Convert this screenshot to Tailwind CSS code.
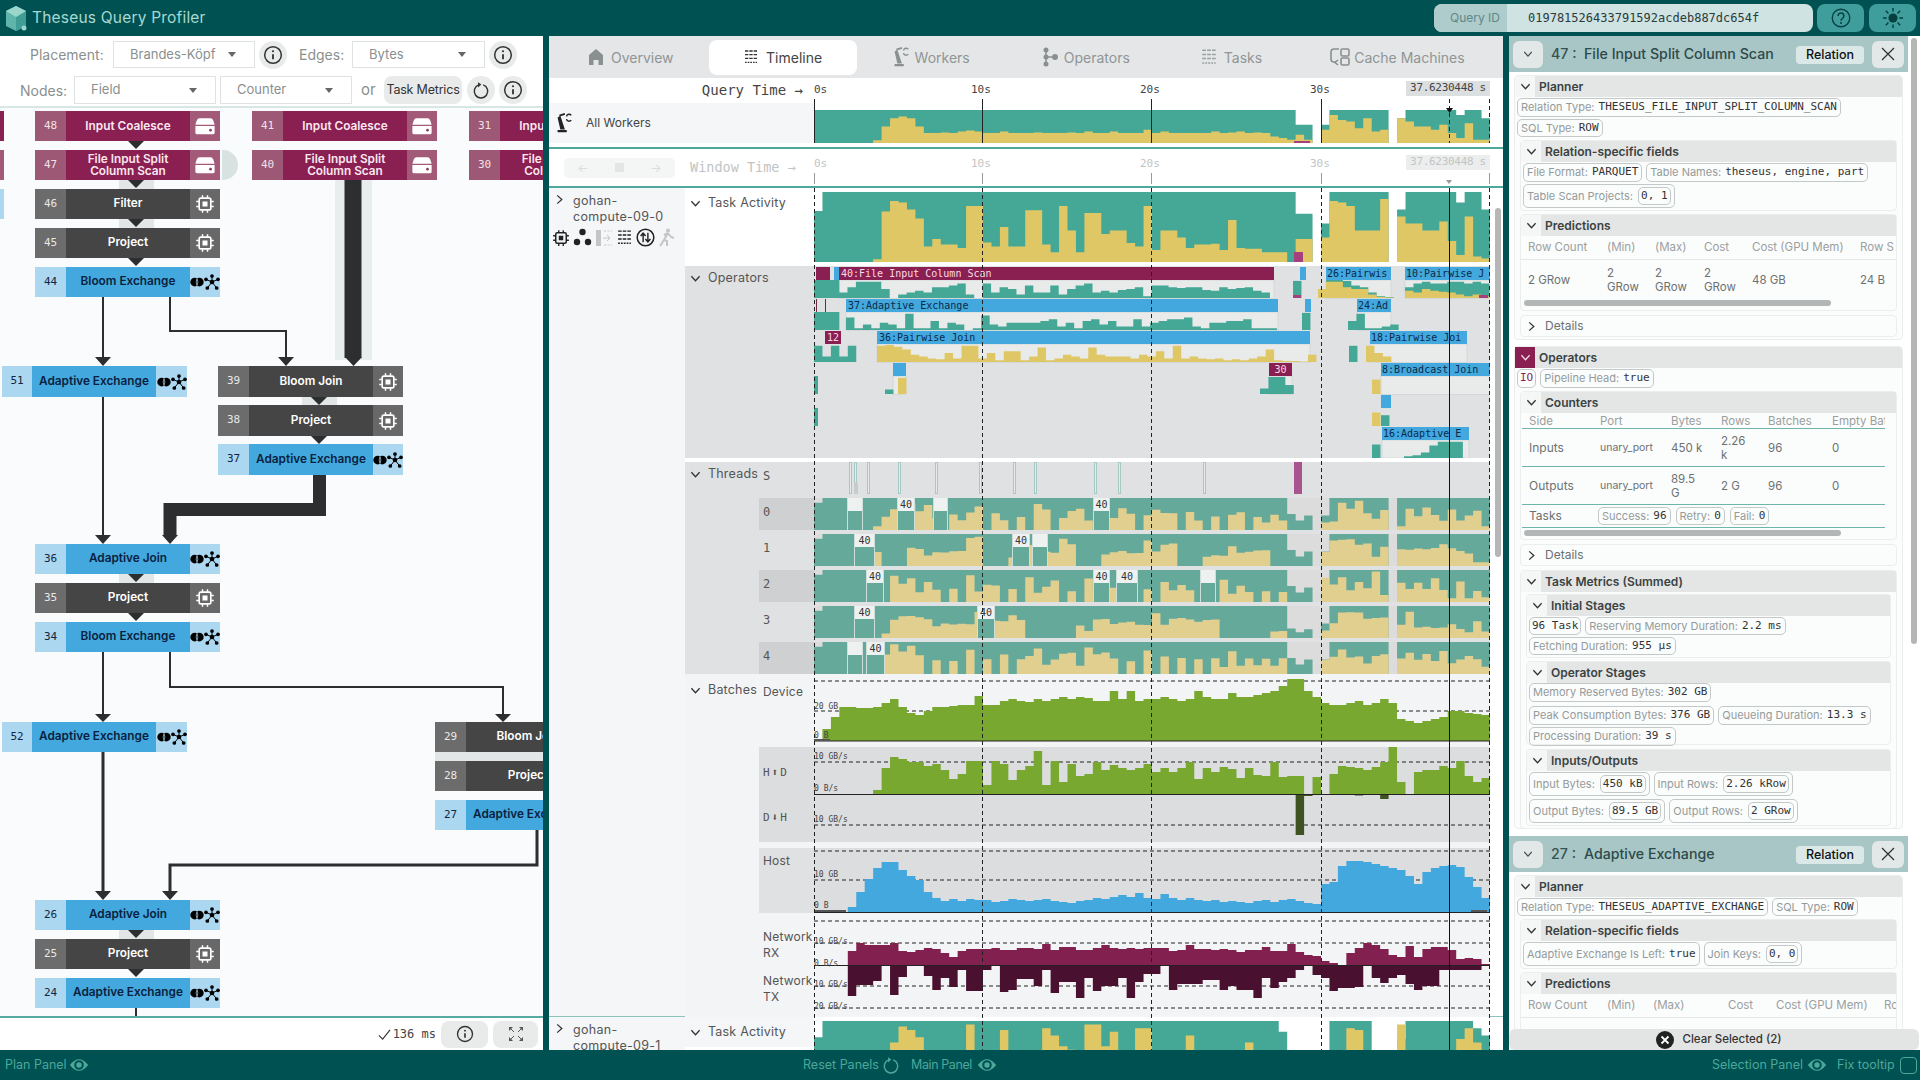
<!DOCTYPE html>
<html lang="en">
<head>
<meta charset="utf-8">
<title>Theseus Query Profiler</title>
<script src="https://cdn.jsdelivr.net/npm/@tailwindcss/browser@4"></script>
</head>
<body class="m-0 h-[1080px] w-[1920px] overflow-hidden bg-[#005151] font-['Inter',sans-serif]">
<svg class="hidden">
  <symbol id="chip" viewBox="0 0 24 24"><rect x="5" y="5" width="14" height="14" rx="2" fill="none" stroke="currentColor" stroke-width="2"/><rect x="9" y="9" width="6" height="6" fill="currentColor"/><path d="M9 1.500v3M15 1.500v3M9 19.500v3M15 19.500v3M1.500 9h3M1.500 15h3M19.500 9h3M19.500 15h3" stroke="currentColor" stroke-width="1.800" fill="none"/></symbol>
  <symbol id="drive" viewBox="0 0 24 24"><path d="M6 3.500h12q2 0 3 2.500l1.500 4.500h-21L3 6q1-2.500 3-2.500z" fill="currentColor"/><path d="M1.500 12h21v7q0 2-2 2h-17q-2 0-2-2z" fill="currentColor"/><circle cx="18" cy="16.500" r="1.500" fill="#8a3f62"/></symbol>
  <symbol id="join" viewBox="0 0 24 24"><circle cx="8" cy="12" r="7.500" fill="currentColor"/><circle cx="16" cy="12" r="7.500" fill="currentColor"/><path d="M12 6q-3 6 0 12M12 6q3 6 0 12" stroke="#acd7f0" stroke-width="1.200" fill="none"/></symbol>
  <symbol id="net" viewBox="0 0 24 24"><path d="M12 12 12 3M12 12 3 8M12 12 21 8M12 12 5 21M12 12 19 21" stroke="currentColor" stroke-width="1.500" fill="none"/><circle cx="12" cy="12" r="3.500" fill="currentColor"/><circle cx="12" cy="3" r="2.800" fill="currentColor"/><circle cx="3" cy="8" r="2.800" fill="currentColor"/><circle cx="21" cy="8" r="2.800" fill="currentColor"/><circle cx="5" cy="21" r="2.800" fill="currentColor"/><circle cx="19" cy="21" r="2.800" fill="currentColor"/></symbol>
  <symbol id="info" viewBox="0 0 24 24"><circle cx="12" cy="12" r="10" fill="none" stroke="currentColor" stroke-width="1.800"/><path d="M12 11v6" stroke="currentColor" stroke-width="2.200"/><circle cx="12" cy="7.500" r="1.300" fill="currentColor"/></symbol>
  <symbol id="reload" viewBox="0 0 24 24"><path d="M9 5.200A9 9 0 1 0 15 5.200" fill="none" stroke="currentColor" stroke-width="1.900"/><path d="M8 1.500 12.500 4.500 8 8.500z" fill="currentColor"/></symbol>
  <symbol id="eye" viewBox="0 0 24 24"><path d="M1 12Q12-2 23 12 12 26 1 12z" fill="currentColor"/><circle cx="12" cy="12" r="4.500" fill="none" stroke="#005151" stroke-width="2.500"/></symbol>
  <symbol id="chev" viewBox="0 0 12 12"><path d="M1.500 3.500 6 8.500 10.500 3.500" fill="none" stroke="currentColor" stroke-width="1.400"/></symbol>
  <symbol id="chevr" viewBox="0 0 12 12"><path d="M3.500 1.500 8.500 6 3.500 10.500" fill="none" stroke="currentColor" stroke-width="1.400"/></symbol>
  <symbol id="lines" viewBox="0 0 24 24"><path d="M3 3h18M3 8.500h18M3 14h18" stroke="currentColor" stroke-width="2" stroke-dasharray="5 1.500" fill="none"/><path d="M3 20h18" stroke="currentColor" stroke-width="2" stroke-dasharray="2.500 1.500" fill="none"/></symbol>
  <symbol id="robot" viewBox="0 0 24 24"><path d="M5 22h10v-2.500H5zM8 19 5 6l3-2 5 15z" fill="currentColor"/><path d="M7 4 13 2" stroke="currentColor" stroke-width="2"/><path d="M20 3.500a4 4 0 0 0-5 0M20 9a4 4 0 0 1-5 0M15 3.500v1.500M15 9V7.500" fill="none" stroke="currentColor" stroke-width="1.500"/></symbol>
</svg>

<div class="flex h-[1080px] flex-col">
  <!-- top bar -->
  <header class="flex h-[36px] shrink-0 items-center">
    <svg class="ml-[5px] h-[27px] w-[22px]" viewBox="0 0 22 27"><path d="M11 1 21 6v15l-10 5-10-5V6z" fill="#5fb5ab"/><path d="M11 12 21 6v15l-10 5z" fill="#3f9d95"/><path d="M11 12 1 6l10-5 10 5z" fill="#9ad6cc"/><circle cx="19" cy="23" r="2.500" fill="#9ad6cc"/></svg>
    <span class="ml-[5px] text-[15.5px] tracking-[.2px] text-[#a7d9d2]">Theseus Query Profiler</span>
    <div class="ml-auto flex h-[28px] w-[379px] items-center rounded-[8px] bg-[#cfe3e3]">
      <span class="flex h-full w-[73px] items-center justify-end rounded-l-[8px] bg-[#aecccc] pr-[7px] text-[12px] text-[#5f8888]">Query ID</span>
      <span class="ml-[21px] font-['DejaVu_Sans_Mono'] text-[12px] text-[#2b3a3a]">019781526433791592acdeb887dc654f</span>
    </div>
    <div class="ml-[4px] flex h-[28px] w-[47px] items-center justify-center rounded-[8px] bg-[#3f9d9c] text-[#063f3f]"><svg class="h-[20px] w-[20px]" viewBox="0 0 24 24"><circle cx="12" cy="12" r="10.500" fill="none" stroke="currentColor" stroke-width="1.600"/><path d="M8.500 9.500a3.500 3.500 0 1 1 5.500 2.800c-1.300.9-2 1.500-2 3" fill="none" stroke="currentColor" stroke-width="1.800"/><circle cx="12" cy="18" r="1.200" fill="currentColor"/></svg></div>
    <div class="ml-[5px] mr-[4px] flex h-[28px] w-[47px] items-center justify-center rounded-[8px] bg-[#3f9d9c] text-[#063f3f]"><svg class="h-[22px] w-[22px]" viewBox="0 0 24 24"><circle cx="12" cy="12" r="5" fill="currentColor"/><path d="M12 1v4M12 19v4M1 12h4M19 12h4M4.200 4.200l2.800 2.800M17 17l2.800 2.800M4.200 19.800 7 17M17 7l2.800-2.800" stroke="currentColor" stroke-width="1.600"/></svg></div>
  </header>

  <div class="flex h-[1014px] shrink-0">
    <!-- left: plan panel -->
    <section class="flex w-[543px] shrink-0 flex-col bg-white">
      <div class="h-[72px] shrink-0 border-b-2 border-[#d8e6e4]">
        <div class="mt-[5px] flex h-[27px] items-center pl-[30px] text-[14px] text-[#8a8f8f]">
          <span class="w-[83px]">Placement:</span>
          <div class="flex h-full w-[142px] items-center justify-between border border-[#dfe2e2] pl-[16px] pr-[18px] text-[13px]"><span>Brandes-Köpf</span><span class="h-0 w-0 border-x-[4px] border-t-[5px] border-x-transparent border-t-[#666]"></span></div>
          <span class="ml-[4px] flex h-[28px] w-[28px] items-center justify-center rounded-full bg-[#e9eaea] text-[#333]"><svg class="h-[20px] w-[20px]"><use href="#info"/></svg></span>
          <span class="ml-[12px] w-[53px]">Edges:</span>
          <div class="flex h-full w-[133px] items-center justify-between border border-[#dfe2e2] pl-[16px] pr-[18px] text-[13px]"><span>Bytes</span><span class="h-0 w-0 border-x-[4px] border-t-[5px] border-x-transparent border-t-[#666]"></span></div>
          <span class="ml-[4px] flex h-[28px] w-[28px] items-center justify-center rounded-full bg-[#e9eaea] text-[#333]"><svg class="h-[20px] w-[20px]"><use href="#info"/></svg></span>
        </div>
        <div class="mt-[8px] flex h-[28px] items-center pl-[20px] text-[14px] text-[#8a8f8f]">
          <span class="w-[54px]">Nodes:</span>
          <div class="flex h-full w-[142px] items-center justify-between border border-[#dfe2e2] pl-[16px] pr-[18px] text-[13px]"><span>Field</span><span class="h-0 w-0 border-x-[4px] border-t-[5px] border-x-transparent border-t-[#666]"></span></div>
          <div class="ml-[4px] flex h-full w-[132px] items-center justify-between border border-[#dfe2e2] pl-[16px] pr-[18px] text-[13px]"><span>Counter</span><span class="h-0 w-0 border-x-[4px] border-t-[5px] border-x-transparent border-t-[#666]"></span></div>
          <span class="ml-[9px] w-[15px] text-[15px]">or</span>
          <span class="ml-[8px] flex h-full w-[78px] items-center justify-center rounded-[8px] bg-[#e9eaea] text-[12.5px] tracking-[-.2px] text-[#333]">Task Metrics</span>
          <span class="ml-[5px] flex h-[28px] w-[28px] items-center justify-center rounded-full bg-[#e9eaea] text-[#333]"><svg class="h-[18px] w-[18px]"><use href="#reload"/></svg></span>
          <span class="ml-[4px] flex h-[28px] w-[28px] items-center justify-center rounded-full bg-[#e9eaea] text-[#333]"><svg class="h-[20px] w-[20px]"><use href="#info"/></svg></span>
        </div>
      </div>

      <div class="relative h-[908px] flex-1 overflow-hidden bg-[#f9fbfc]">
        <svg class="absolute left-0 top-0 h-[908px] w-[543px]" fill="none" stroke="#2c2e30">
          <rect x="119" y="72" width="35" height="9" fill="#e3e6e6" stroke="none"/><rect x="119" y="111" width="35" height="9" fill="#e3e6e6" stroke="none"/><rect x="302" y="289" width="35" height="8" fill="#e3e6e6" stroke="none"/><rect x="119" y="466" width="35" height="9" fill="#e3e6e6" stroke="none"/><rect x="119" y="822" width="35" height="9" fill="#e3e6e6" stroke="none"/><rect x="435" y="644" width="108" height="9" fill="#e3e6e6" stroke="none"/>
          <rect x="335" y="72" width="37" height="180" fill="#e8eeee" stroke="none"/>
          <path d="M353 72V250" stroke-width="17"/>
          <path d="M103 189V252M170 189V223H286V252" stroke-width="2"/>
          <path d="M103 289V428" stroke-width="2"/>
          <path d="M319.500 367V401.500H170V428" stroke-width="13"/>
          <path d="M103 544V608M170 544V579H503V608" stroke-width="2"/>
          <path d="M103 644V785M537 722V757H170V785" stroke-width="3"/>
          <path d="M136 900V908" stroke-width="2"/>
          <g fill="#2c2e30" stroke="none">
            <path d="M128 33h16l-8 8zM128 72h16l-8 8zM128 111h16l-8 8zM128 150h16l-8 8z"/>
            <path d="M345 249h17l-8.500 9zM95 249h16l-8 9zM278 249h16l-8 9z"/>
            <path d="M311 289h16l-8 8zM311 328h16l-8 8z"/>
            <path d="M95 427h16l-8 9zM162 427h16l-8 9zM128 466h16l-8 8zM128 505h16l-8 8z"/>
            <path d="M95 606h16l-8 8zM495 606h16l-8 8zM527 653h16l-8 8zM527 692h16l-8 8z"/>
            <path d="M95 783h16l-8 9zM162 783h16l-8 9zM128 822h16l-8 8zM128 861h16l-8 8z"/>
          </g>
        </svg>

        <!-- plan nodes -->
        <div class="absolute left-[-181px] top-[3px] flex h-[30px] w-[185px] items-center bg-[#8a1f52]"></div>
        <div class="absolute left-[-181px] top-[42px] flex h-[30px] w-[185px] items-center bg-[#a35a78]"></div>
        <div class="absolute left-[-181px] top-[81px] h-[30px] w-[185px] bg-[#acd7f0]"></div>
        <div class="absolute left-[222px] top-[42px] h-[30px] w-[16px] rounded-r-full bg-[#d7e2e1]"></div>

        <div class="absolute left-[35px] top-[3px] flex h-[30px] w-[185px] text-white"><span class="flex w-[31px] items-center justify-center bg-[#9c5874] font-['DejaVu_Sans_Mono'] text-[11px] text-[#f4e1e9]">48</span><span class="flex w-[124px] items-center justify-center bg-[#8a1f52] text-center text-[11.800px] font-semibold leading-[12px] text-[#fbe7ef]">Input Coalesce</span><span class="flex w-[30px] items-center justify-center bg-[#a35a78]"><svg class="h-[22px] w-[22px] text-white"><use href="#drive"/></svg></span></div>
        <div class="absolute left-[35px] top-[42px] flex h-[30px] w-[185px] text-white"><span class="flex w-[31px] items-center justify-center bg-[#9c5874] font-['DejaVu_Sans_Mono'] text-[11px] text-[#f4e1e9]">47</span><span class="flex w-[124px] items-center justify-center bg-[#8a1f52] text-center text-[11.800px] font-semibold leading-[12px] text-[#fbe7ef]">File Input Split<br>Column Scan</span><span class="flex w-[30px] items-center justify-center bg-[#a35a78]"><svg class="h-[22px] w-[22px] text-white"><use href="#drive"/></svg></span></div>
        <div class="absolute left-[35px] top-[81px] flex h-[30px] w-[185px]"><span class="flex w-[31px] items-center justify-center bg-[#6c6c6c] font-['DejaVu_Sans_Mono'] text-[11px] text-[#e8e8e8]">46</span><span class="flex w-[124px] items-center justify-center bg-[#454545] text-[11.800px] font-semibold text-white">Filter</span><span class="flex w-[30px] items-center justify-center bg-[#686868] text-white"><svg class="h-[20px] w-[20px]"><use href="#chip"/></svg></span></div>
        <div class="absolute left-[35px] top-[120px] flex h-[30px] w-[185px]"><span class="flex w-[31px] items-center justify-center bg-[#6c6c6c] font-['DejaVu_Sans_Mono'] text-[11px] text-[#e8e8e8]">45</span><span class="flex w-[124px] items-center justify-center bg-[#454545] text-[11.800px] font-semibold text-white">Project</span><span class="flex w-[30px] items-center justify-center bg-[#686868] text-white"><svg class="h-[20px] w-[20px]"><use href="#chip"/></svg></span></div>
        <div class="absolute left-[35px] top-[159px] flex h-[30px] w-[185px]"><span class="flex w-[31px] items-center justify-center bg-[#acd7f0] font-['DejaVu_Sans_Mono'] text-[11px] text-[#12263f]">44</span><span class="flex w-[124px] items-center justify-center bg-[#42a8de] text-[11.800px] font-semibold text-[#0a1f3f]">Bloom Exchange</span><span class="flex w-[30px] items-center justify-center bg-[#acd7f0] text-black"><svg class="h-[14px] w-[14px]"><use href="#join"/></svg><svg class="h-[16px] w-[16px]"><use href="#net"/></svg></span></div>

        <div class="absolute left-[252px] top-[3px] flex h-[30px] w-[185px]"><span class="flex w-[31px] items-center justify-center bg-[#9c5874] font-['DejaVu_Sans_Mono'] text-[11px] text-[#f4e1e9]">41</span><span class="flex w-[124px] items-center justify-center bg-[#8a1f52] text-center text-[11.800px] font-semibold leading-[12px] text-[#fbe7ef]">Input Coalesce</span><span class="flex w-[30px] items-center justify-center bg-[#a35a78]"><svg class="h-[22px] w-[22px] text-white"><use href="#drive"/></svg></span></div>
        <div class="absolute left-[252px] top-[42px] flex h-[30px] w-[185px]"><span class="flex w-[31px] items-center justify-center bg-[#9c5874] font-['DejaVu_Sans_Mono'] text-[11px] text-[#f4e1e9]">40</span><span class="flex w-[124px] items-center justify-center bg-[#8a1f52] text-center text-[11.800px] font-semibold leading-[12px] text-[#fbe7ef]">File Input Split<br>Column Scan</span><span class="flex w-[30px] items-center justify-center bg-[#a35a78]"><svg class="h-[22px] w-[22px] text-white"><use href="#drive"/></svg></span></div>
        <div class="absolute left-[469px] top-[3px] flex h-[30px] w-[185px]"><span class="flex w-[31px] items-center justify-center bg-[#9c5874] font-['DejaVu_Sans_Mono'] text-[11px] text-[#f4e1e9]">31</span><span class="flex w-[124px] items-center justify-center bg-[#8a1f52] text-center text-[11.800px] font-semibold leading-[12px] text-[#fbe7ef]">Input Coalesce</span></div>
        <div class="absolute left-[469px] top-[42px] flex h-[30px] w-[185px]"><span class="flex w-[31px] items-center justify-center bg-[#9c5874] font-['DejaVu_Sans_Mono'] text-[11px] text-[#f4e1e9]">30</span><span class="flex w-[124px] items-center justify-center bg-[#8a1f52] text-center text-[11.800px] font-semibold leading-[12px] text-[#fbe7ef]">File Input Split<br>Column Scan</span></div>

        <div class="absolute left-[2px] top-[258px] flex h-[31px] w-[185px]"><span class="flex w-[30px] items-center justify-center bg-[#acd7f0] font-['DejaVu_Sans_Mono'] text-[11px] text-[#12263f]">51</span><span class="flex w-[124px] items-center justify-center bg-[#42a8de] text-[11.800px] font-semibold text-[#0a1f3f]">Adaptive Exchange</span><span class="flex w-[31px] items-center justify-center bg-[#acd7f0] text-black"><svg class="h-[14px] w-[14px]"><use href="#join"/></svg><svg class="h-[16px] w-[16px]"><use href="#net"/></svg></span></div>
        <div class="absolute left-[218px] top-[258px] flex h-[31px] w-[185px]"><span class="flex w-[31px] items-center justify-center bg-[#6c6c6c] font-['DejaVu_Sans_Mono'] text-[11px] text-[#e8e8e8]">39</span><span class="flex w-[124px] items-center justify-center bg-[#454545] text-[11.800px] font-semibold text-white">Bloom Join</span><span class="flex w-[30px] items-center justify-center bg-[#686868] text-white"><svg class="h-[20px] w-[20px]"><use href="#chip"/></svg></span></div>
        <div class="absolute left-[218px] top-[297px] flex h-[31px] w-[185px]"><span class="flex w-[31px] items-center justify-center bg-[#6c6c6c] font-['DejaVu_Sans_Mono'] text-[11px] text-[#e8e8e8]">38</span><span class="flex w-[124px] items-center justify-center bg-[#454545] text-[11.800px] font-semibold text-white">Project</span><span class="flex w-[30px] items-center justify-center bg-[#686868] text-white"><svg class="h-[20px] w-[20px]"><use href="#chip"/></svg></span></div>
        <div class="absolute left-[218px] top-[336px] flex h-[31px] w-[185px]"><span class="flex w-[31px] items-center justify-center bg-[#acd7f0] font-['DejaVu_Sans_Mono'] text-[11px] text-[#12263f]">37</span><span class="flex w-[124px] items-center justify-center bg-[#42a8de] text-[11.800px] font-semibold text-[#0a1f3f]">Adaptive Exchange</span><span class="flex w-[30px] items-center justify-center bg-[#acd7f0] text-black"><svg class="h-[14px] w-[14px]"><use href="#join"/></svg><svg class="h-[16px] w-[16px]"><use href="#net"/></svg></span></div>

        <div class="absolute left-[35px] top-[436px] flex h-[30px] w-[185px]"><span class="flex w-[31px] items-center justify-center bg-[#acd7f0] font-['DejaVu_Sans_Mono'] text-[11px] text-[#12263f]">36</span><span class="flex w-[124px] items-center justify-center bg-[#42a8de] text-[11.800px] font-semibold text-[#0a1f3f]">Adaptive Join</span><span class="flex w-[30px] items-center justify-center bg-[#acd7f0] text-black"><svg class="h-[14px] w-[14px]"><use href="#join"/></svg><svg class="h-[16px] w-[16px]"><use href="#net"/></svg></span></div>
        <div class="absolute left-[35px] top-[475px] flex h-[30px] w-[185px]"><span class="flex w-[31px] items-center justify-center bg-[#6c6c6c] font-['DejaVu_Sans_Mono'] text-[11px] text-[#e8e8e8]">35</span><span class="flex w-[124px] items-center justify-center bg-[#454545] text-[11.800px] font-semibold text-white">Project</span><span class="flex w-[30px] items-center justify-center bg-[#686868] text-white"><svg class="h-[20px] w-[20px]"><use href="#chip"/></svg></span></div>
        <div class="absolute left-[35px] top-[514px] flex h-[30px] w-[185px]"><span class="flex w-[31px] items-center justify-center bg-[#acd7f0] font-['DejaVu_Sans_Mono'] text-[11px] text-[#12263f]">34</span><span class="flex w-[124px] items-center justify-center bg-[#42a8de] text-[11.800px] font-semibold text-[#0a1f3f]">Bloom Exchange</span><span class="flex w-[30px] items-center justify-center bg-[#acd7f0] text-black"><svg class="h-[14px] w-[14px]"><use href="#join"/></svg><svg class="h-[16px] w-[16px]"><use href="#net"/></svg></span></div>

        <div class="absolute left-[2px] top-[614px] flex h-[30px] w-[185px]"><span class="flex w-[30px] items-center justify-center bg-[#acd7f0] font-['DejaVu_Sans_Mono'] text-[11px] text-[#12263f]">52</span><span class="flex w-[124px] items-center justify-center bg-[#42a8de] text-[11.800px] font-semibold text-[#0a1f3f]">Adaptive Exchange</span><span class="flex w-[31px] items-center justify-center bg-[#acd7f0] text-black"><svg class="h-[14px] w-[14px]"><use href="#join"/></svg><svg class="h-[16px] w-[16px]"><use href="#net"/></svg></span></div>
        <div class="absolute left-[435px] top-[614px] flex h-[30px] w-[185px]"><span class="flex w-[31px] items-center justify-center bg-[#6c6c6c] font-['DejaVu_Sans_Mono'] text-[11px] text-[#e8e8e8]">29</span><span class="flex w-[124px] items-center justify-center bg-[#454545] text-[11.800px] font-semibold text-white">Bloom Join</span></div>
        <div class="absolute left-[435px] top-[653px] flex h-[30px] w-[185px]"><span class="flex w-[31px] items-center justify-center bg-[#6c6c6c] font-['DejaVu_Sans_Mono'] text-[11px] text-[#e8e8e8]">28</span><span class="flex w-[124px] items-center justify-center bg-[#454545] text-[11.800px] font-semibold text-white">Project</span></div>
        <div class="absolute left-[435px] top-[692px] flex h-[30px] w-[185px]"><span class="flex w-[31px] items-center justify-center bg-[#acd7f0] font-['DejaVu_Sans_Mono'] text-[11px] text-[#12263f]">27</span><span class="flex w-[124px] items-center justify-center bg-[#42a8de] text-[11.800px] font-semibold text-[#0a1f3f]">Adaptive Exchange</span></div>

        <div class="absolute left-[35px] top-[792px] flex h-[30px] w-[185px]"><span class="flex w-[31px] items-center justify-center bg-[#acd7f0] font-['DejaVu_Sans_Mono'] text-[11px] text-[#12263f]">26</span><span class="flex w-[124px] items-center justify-center bg-[#42a8de] text-[11.800px] font-semibold text-[#0a1f3f]">Adaptive Join</span><span class="flex w-[30px] items-center justify-center bg-[#acd7f0] text-black"><svg class="h-[14px] w-[14px]"><use href="#join"/></svg><svg class="h-[16px] w-[16px]"><use href="#net"/></svg></span></div>
        <div class="absolute left-[35px] top-[831px] flex h-[30px] w-[185px]"><span class="flex w-[31px] items-center justify-center bg-[#6c6c6c] font-['DejaVu_Sans_Mono'] text-[11px] text-[#e8e8e8]">25</span><span class="flex w-[124px] items-center justify-center bg-[#454545] text-[11.800px] font-semibold text-white">Project</span><span class="flex w-[30px] items-center justify-center bg-[#686868] text-white"><svg class="h-[20px] w-[20px]"><use href="#chip"/></svg></span></div>
        <div class="absolute left-[35px] top-[870px] flex h-[30px] w-[185px]"><span class="flex w-[31px] items-center justify-center bg-[#acd7f0] font-['DejaVu_Sans_Mono'] text-[11px] text-[#12263f]">24</span><span class="flex w-[124px] items-center justify-center bg-[#42a8de] text-[11.800px] font-semibold text-[#0a1f3f]">Adaptive Exchange</span><span class="flex w-[30px] items-center justify-center bg-[#acd7f0] text-black"><svg class="h-[14px] w-[14px]"><use href="#join"/></svg><svg class="h-[16px] w-[16px]"><use href="#net"/></svg></span></div>
      </div>

      <div class="flex h-[34px] shrink-0 items-center justify-end border-t-2 border-[#55ab9f] bg-white pr-[5px]">
        <svg class="h-[13px] w-[13px] text-[#333]" viewBox="0 0 14 14"><path d="M1 8 5 12 13 2" fill="none" stroke="currentColor" stroke-width="1.200"/></svg>
        <span class="ml-[2px] font-['DejaVu_Sans_Mono'] text-[12px] text-[#444]">136 ms</span>
        <span class="ml-[5px] flex h-[27px] w-[47px] items-center justify-center rounded-[8px] bg-[#e9eaea] text-[#333]"><svg class="h-[18px] w-[18px]"><use href="#info"/></svg></span>
        <span class="ml-[5px] flex h-[27px] w-[45px] items-center justify-center rounded-[8px] bg-[#e9eaea] text-[#555]"><svg class="h-[16px] w-[16px]" viewBox="0 0 16 16"><path d="M1 1h4L1 5zM15 1h-4l4 4zM1 15h4l-4-4zM15 15h-4l4-4z" fill="currentColor"/><path d="M3 3 6 6M13 3l-3 3M3 13l3-3M13 13l-3-3" stroke="currentColor"/></svg></span>
      </div>
    </section>

    <!-- main: timeline -->
    <main class="relative ml-[6px] flex w-[954px] shrink-0 flex-col overflow-hidden bg-white">
      <nav class="flex h-[42px] shrink-0 items-center bg-[#e4e6e7] text-[14px] text-[#909595]">
        <span class="ml-[38px] flex items-center"><svg class="h-[18px] w-[18px]" viewBox="0 0 18 18"><path d="M9 1 16 7v10h-4.500v-5h-5v5H2V7z" fill="#8a8f8f"/></svg><span class="ml-[6px]">Overview</span></span>
        <span class="ml-[35px] flex h-[35px] w-[148px] items-center justify-center rounded-[8px] bg-white text-[#444]"><svg class="h-[16px] w-[16px] text-[#333]"><use href="#lines"/></svg><span class="ml-[7px]">Timeline</span></span>
        <span class="ml-[33px] flex items-center text-[#8a8f8f]"><svg class="h-[22px] w-[22px]"><use href="#robot"/></svg><span class="ml-[3px] text-[#909595]">Workers</span></span>
        <span class="ml-[71px] flex items-center"><svg class="h-[20px] w-[18px]" viewBox="0 0 18 20"><circle cx="5" cy="3" r="2.500" fill="#8a8f8f"/><circle cx="5" cy="17" r="2.500" fill="#8a8f8f"/><circle cx="5" cy="10" r="2.500" fill="#8a8f8f"/><circle cx="14" cy="10" r="3" fill="#8a8f8f"/><path d="M5 3v14M5 10h9" stroke="#8a8f8f" stroke-width="1.500"/></svg><span class="ml-[5px]">Operators</span></span>
        <span class="ml-[70px] flex items-center"><svg class="h-[18px] w-[18px] text-[#9a9f9f]"><use href="#lines"/></svg><span class="ml-[6px]">Tasks</span></span>
        <span class="ml-[68px] flex items-center"><svg class="h-[20px] w-[20px]" viewBox="0 0 20 20" fill="none" stroke="#8a8f8f" stroke-width="1.600"><path d="M9 2H4Q1 2 1 5v7q0 3 3 3h2"/><rect x="11" y="2" width="8" height="7" rx="1.500"/><rect x="11" y="11" width="8" height="7" rx="1.500"/><path d="M8 13l-3 2.500L8 18" /></svg><span class="ml-[4px]">Cache Machines</span></span>
      </nav>

      <!-- query time -->
      <div class="flex h-[71px] shrink-0 border-b-2 border-[#4fa89c]">
        <div class="flex w-[265px] shrink-0 flex-col">
          <div class="flex h-[25px] items-center justify-end pr-[11px] font-['DejaVu_Sans_Mono'] text-[14px] text-[#444]">Query Time →</div>
          <div class="flex h-[40px] items-center bg-[#f5f6f7] pl-[4px] text-[12px] text-[#444]"><svg class="h-[22px] w-[22px] text-[#222]"><use href="#robot"/></svg><span class="ml-[11px]">All Workers</span></div>
        </div>
        <div class="relative w-[676px] shrink-0">
          <span class="absolute left-0 top-[4px] font-['DejaVu_Sans_Mono'] text-[11px] text-[#444]">0s</span>
          <span class="absolute left-[157px] top-[4px] font-['DejaVu_Sans_Mono'] text-[11px] text-[#444]">10s</span>
          <span class="absolute left-[326px] top-[4px] font-['DejaVu_Sans_Mono'] text-[11px] text-[#444]">20s</span>
          <span class="absolute left-[496px] top-[4px] font-['DejaVu_Sans_Mono'] text-[11px] text-[#444]">30s</span>
          <span class="absolute left-[592px] top-[3px] flex h-[15px] w-[84px] items-center justify-center bg-[#dcdfe0] font-['DejaVu_Sans_Mono'] text-[11px] tracking-[-.3px] text-[#444]">37.6230448 s</span>
          <svg id="cAll" class="absolute left-0 top-[21px] h-[48px] w-[676px]"></svg>
        </div>
      </div>

      <!-- window time -->
      <div class="flex h-[39px] shrink-0 border-b-2 border-[#4fa89c]">
        <div class="flex w-[265px] shrink-0 items-center">
          <div class="ml-[15px] flex h-[20px] w-[111px] items-center justify-around rounded-[5px] bg-[#f4f5f5] text-[12px] text-[#dcdcdc]"><span>←</span><span class="h-[9px] w-[9px] bg-[#e4e4e4]"></span><span>→</span></div>
          <span class="ml-[15px] whitespace-nowrap font-['DejaVu_Sans_Mono'] text-[13.500px] text-[#c2c4c4]">Window Time →</span>
        </div>
        <div class="relative w-[676px] shrink-0">
          <span class="absolute left-0 top-[7px] font-['DejaVu_Sans_Mono'] text-[11px] text-[#c2c4c4]">0s</span>
          <span class="absolute left-[157px] top-[7px] font-['DejaVu_Sans_Mono'] text-[11px] text-[#c2c4c4]">10s</span>
          <span class="absolute left-[326px] top-[7px] font-['DejaVu_Sans_Mono'] text-[11px] text-[#c2c4c4]">20s</span>
          <span class="absolute left-[496px] top-[7px] font-['DejaVu_Sans_Mono'] text-[11px] text-[#c2c4c4]">30s</span>
          <span class="absolute left-[592px] top-[6px] flex h-[15px] w-[84px] items-center justify-center bg-[#eceeee] font-['DejaVu_Sans_Mono'] text-[11px] tracking-[-.3px] text-[#c2c4c4]">37.6230448 s</span>
          <svg class="absolute left-0 top-[24px] h-[13px] w-[676px]" stroke="#999"><path d="M.5 0V11M168.500 0V11M337.500 0V11M507.500 0V11M675.500 0V11"/><path d="M632 7h6l-3 4z" fill="#999" stroke="none"/></svg>
        </div>
      </div>

      <!-- worker list -->
      <div class="relative min-h-0 flex-1 overflow-hidden bg-white">
        <div class="flex h-[829px] border-b border-[#8cc4bb]">
          <div class="w-[136px] shrink-0 bg-[#f4f6f8]">
            <div class="flex pl-[5px] pt-[5px] text-[#333]"><svg class="mt-[1px] h-[11px] w-[11px]"><use href="#chevr"/></svg><span class="ml-[8px] text-[12.500px] leading-[16px] tracking-[.3px] text-[#555]">gohan-<br>compute-09-0</span></div>
            <div class="ml-[3px] mt-[3px] flex items-center gap-[3px] text-[#222]">
              <svg class="h-[18px] w-[18px]"><use href="#chip"/></svg>
              <svg class="h-[19px] w-[19px]" viewBox="0 0 19 19"><circle cx="9.500" cy="4" r="3.200" fill="currentColor"/><circle cx="4" cy="14" r="3.200" fill="currentColor"/><circle cx="15" cy="14" r="3.200" fill="currentColor"/></svg>
              <svg class="h-[18px] w-[18px]" viewBox="0 0 18 18"><rect x="1" y="1" width="5" height="16" fill="#c4c6c6"/><path d="M8 9h7M12 6l3 3-3 3" stroke="#c4c6c6" fill="none"/><path d="M9 2h8M9 16h8" stroke="#c4c6c6" stroke-dasharray="2 1.500"/></svg>
              <svg class="h-[17px] w-[17px]"><use href="#lines"/></svg>
              <svg class="h-[19px] w-[19px]" viewBox="0 0 24 24"><circle cx="12" cy="12" r="10.500" fill="none" stroke="currentColor" stroke-width="1.900"/><path d="M9 18V7M5.800 10 9 6.500 12.200 10M15 6v11M11.800 14 15 17.500 18.200 14" fill="none" stroke="currentColor" stroke-width="1.800"/></svg>
              <svg class="h-[19px] w-[17px] text-[#c4c6c6]" viewBox="0 0 17 19"><circle cx="10" cy="2.500" r="2" fill="currentColor"/><path d="M2 18 6 12 9 13 9 18M10 5 6 12M10 5 13 9 16 10M6 7l4-2" fill="none" stroke="currentColor" stroke-width="2"/></svg>
            </div>
          </div>
          <div class="w-[805px] shrink-0">
            <!-- task activity -->
            <div class="flex h-[78px]">
              <div class="flex h-[30px] w-[129px] shrink-0 items-center pl-[5px] text-[#333]"><svg class="h-[11px] w-[11px] shrink-0"><use href="#chev"/></svg><span class="ml-[7px] whitespace-nowrap text-[12.500px] tracking-[.2px] text-[#555]">Task Activity</span></div>
              <svg id="cTask" class="mt-[4px] h-[70px] w-[676px] shrink-0"></svg>
            </div>
            <!-- operators -->
            <div class="flex h-[192px] bg-[#dfe1e2]">
              <div class="flex h-[24px] w-[129px] shrink-0 items-center pl-[5px] text-[#333]"><svg class="h-[11px] w-[11px] shrink-0"><use href="#chev"/></svg><span class="ml-[7px] whitespace-nowrap text-[12.500px] tracking-[.2px] text-[#555]">Operators</span></div>
              <div class="relative h-[192px] w-[676px] shrink-0 overflow-hidden font-['DejaVu_Sans_Mono'] text-[10px] leading-[13px] text-[#0b2a4a]">
                <svg id="cOps" class="absolute inset-0 h-[192px] w-[676px]"></svg>
                <span class="absolute left-[2px] top-[1px] h-[13px] w-[14px] bg-[#8a1f52]"></span>
                <span class="absolute left-[20px] top-[1px] h-[13px] w-[5px] bg-[#42a8de]"></span>
                <span class="absolute left-[25px] top-[1px] h-[13px] w-[435px] overflow-hidden whitespace-nowrap bg-[#8a1f52] pl-[2px] text-[#fbd9e7]">40:File Input Column Scan</span>
                <span class="absolute left-[486px] top-[1px] h-[13px] w-[6px] bg-[#42a8de]"></span>
                <span class="absolute left-[512px] top-[1px] h-[13px] w-[65px] overflow-hidden whitespace-nowrap bg-[#42a8de] pl-[1px]">26:Pairwis</span>
                <span class="absolute left-[591px] top-[1px] h-[13px] w-[85px] overflow-hidden whitespace-nowrap bg-[#42a8de] pl-[1px]">10:Pairwise J</span>
                <span class="absolute left-[2px] top-[33px] h-[13px] w-[1px] bg-[#6b2a45]"></span>
                <span class="absolute left-[11px] top-[33px] h-[13px] w-[1px] bg-[#6b2a45]"></span>
                <span class="absolute left-[32px] top-[33px] h-[13px] w-[432px] overflow-hidden whitespace-nowrap bg-[#42a8de] pl-[2px]">37:Adaptive Exchange</span>
                <span class="absolute left-[491px] top-[33px] h-[13px] w-[6px] bg-[#42a8de]"></span>
                <span class="absolute left-[543px] top-[33px] h-[13px] w-[34px] overflow-hidden whitespace-nowrap bg-[#42a8de] pl-[1px]">24:Ad</span>
                <span class="absolute left-[11px] top-[65px] flex h-[13px] w-[16px] justify-center overflow-hidden bg-[#8a1f52] text-[#fbd9e7]">12</span>
                <span class="absolute left-[63px] top-[65px] h-[13px] w-[433px] overflow-hidden whitespace-nowrap bg-[#42a8de] pl-[2px]">36:Pairwise Join</span>
                <span class="absolute left-[556px] top-[65px] h-[13px] w-[97px] overflow-hidden whitespace-nowrap bg-[#42a8de] pl-[1px]">18:Pairwise Joi</span>
                <span class="absolute left-[79px] top-[97px] h-[13px] w-[13px] bg-[#42a8de]"></span>
                <span class="absolute left-[455px] top-[97px] flex h-[13px] w-[23px] justify-center overflow-hidden bg-[#8a1f52] text-[#fbd9e7]">30</span>
                <span class="absolute left-[567px] top-[97px] h-[13px] w-[109px] overflow-hidden whitespace-nowrap bg-[#42a8de] pl-[1px]">8:Broadcast Join</span>
                <span class="absolute left-[567px] top-[129px] h-[13px] w-[10px] bg-[#42a8de]"></span>
                <span class="absolute left-[568px] top-[161px] h-[13px] w-[87px] overflow-hidden whitespace-nowrap bg-[#42a8de] pl-[1px]">16:Adaptive E</span>
              </div>
            </div>
            <!-- threads -->
            <div class="mt-[4px] flex h-[212px] bg-[#dfe1e2] text-[12.500px] text-[#555]">
              <div class="flex h-[24px] w-[74px] shrink-0 items-center pl-[5px] text-[#333]"><svg class="h-[11px] w-[11px] shrink-0"><use href="#chev"/></svg><span class="ml-[7px] whitespace-nowrap tracking-[.2px] text-[#555]">Threads</span></div>
              <div class="flex w-[731px] flex-col gap-[4px] font-['DejaVu_Sans_Mono'] text-[12px] text-[#555]">
                <div class="flex h-[32px]"><span class="w-[55px] pl-[4px] pt-[5px]">S</span><svg id="cS" class="h-[32px] w-[676px] shrink-0"></svg></div>
                <div class="flex h-[32px] bg-[#dcdcdc]"><span class="flex w-[55px] items-center bg-[#cfd0d1] pb-[5px] pl-[4px]">0</span><div class="relative h-[32px] w-[676px] shrink-0"><svg id="cT0" class="absolute inset-0 h-[32px] w-[676px]"></svg>
                  <div class="absolute left-[33px] top-0 flex h-[32px] w-[16px] flex-col border-x border-[#cddedb] bg-[#65a99a]"><span class="h-[13px] bg-[#edf2f1]"></span></div>
                  <div class="absolute left-[83px] top-0 flex h-[32px] w-[18px] flex-col border-x border-[#cddedb] bg-[#65a99a]"><span class="flex h-[13px] items-center justify-center bg-[#edf2f1] text-[10px] text-[#333]">40</span></div>
                  <div class="absolute left-[119px] top-0 flex h-[32px] w-[15px] flex-col border-x border-[#cddedb] bg-[#65a99a]"><span class="h-[13px] bg-[#edf2f1]"></span></div>
                  <div class="absolute left-[279px] top-0 flex h-[32px] w-[17px] flex-col border-x border-[#cddedb] bg-[#65a99a]"><span class="flex h-[13px] items-center justify-center bg-[#edf2f1] text-[10px] text-[#333]">40</span></div></div></div>
                <div class="flex h-[32px] bg-[#dcdcdc]"><span class="flex w-[55px] items-center bg-[#dfe1e2] pb-[5px] pl-[4px]">1</span><div class="relative h-[32px] w-[676px] shrink-0"><svg id="cT1" class="absolute inset-0 h-[32px] w-[676px]"></svg>
                  <div class="absolute left-[40px] top-0 flex h-[32px] w-[21px] flex-col border-x border-[#cddedb] bg-[#65a99a]"><span class="flex h-[13px] items-center justify-center bg-[#edf2f1] text-[10px] text-[#333]">40</span></div>
                  <div class="absolute left-[198px] top-0 flex h-[32px] w-[18px] flex-col border-x border-[#cddedb] bg-[#65a99a]"><span class="flex h-[13px] items-center justify-center bg-[#edf2f1] text-[10px] text-[#333]">40</span></div>
                  <div class="absolute left-[218px] top-0 flex h-[32px] w-[16px] flex-col border-x border-[#cddedb] bg-[#65a99a]"><span class="h-[13px] bg-[#edf2f1]"></span></div></div></div>
                <div class="flex h-[32px] bg-[#dcdcdc]"><span class="flex w-[55px] items-center bg-[#cfd0d1] pb-[5px] pl-[4px]">2</span><div class="relative h-[32px] w-[676px] shrink-0"><svg id="cT2" class="absolute inset-0 h-[32px] w-[676px]"></svg>
                  <div class="absolute left-[52px] top-0 flex h-[32px] w-[18px] flex-col border-x border-[#cddedb] bg-[#65a99a]"><span class="flex h-[13px] items-center justify-center bg-[#edf2f1] text-[10px] text-[#333]">40</span></div>
                  <div class="absolute left-[279px] top-0 flex h-[32px] w-[17px] flex-col border-x border-[#cddedb] bg-[#65a99a]"><span class="flex h-[13px] items-center justify-center bg-[#edf2f1] text-[10px] text-[#333]">40</span></div>
                  <div class="absolute left-[302px] top-0 flex h-[32px] w-[22px] flex-col border-x border-[#cddedb] bg-[#65a99a]"><span class="flex h-[13px] items-center justify-center bg-[#edf2f1] text-[10px] text-[#333]">40</span></div>
                  <div class="absolute left-[386px] top-0 flex h-[32px] w-[16px] flex-col border-x border-[#cddedb] bg-[#65a99a]"><span class="h-[13px] bg-[#edf2f1]"></span></div></div></div>
                <div class="flex h-[32px] bg-[#dcdcdc]"><span class="flex w-[55px] items-center bg-[#dfe1e2] pb-[5px] pl-[4px]">3</span><div class="relative h-[32px] w-[676px] shrink-0"><svg id="cT3" class="absolute inset-0 h-[32px] w-[676px]"></svg>
                  <div class="absolute left-[40px] top-0 flex h-[32px] w-[21px] flex-col border-x border-[#cddedb] bg-[#65a99a]"><span class="flex h-[13px] items-center justify-center bg-[#edf2f1] text-[10px] text-[#333]">40</span></div>
                  <div class="absolute left-[163px] top-0 flex h-[32px] w-[18px] flex-col border-x border-[#cddedb] bg-[#65a99a]"><span class="flex h-[13px] items-center justify-center bg-[#edf2f1] text-[10px] text-[#333]">40</span></div></div></div>
                <div class="flex h-[32px] bg-[#dcdcdc]"><span class="flex w-[55px] items-center bg-[#cfd0d1] pb-[5px] pl-[4px]">4</span><div class="relative h-[32px] w-[676px] shrink-0"><svg id="cT4" class="absolute inset-0 h-[32px] w-[676px]"></svg>
                  <div class="absolute left-[33px] top-0 flex h-[32px] w-[16px] flex-col border-x border-[#cddedb] bg-[#65a99a]"><span class="h-[13px] bg-[#edf2f1]"></span></div>
                  <div class="absolute left-[52px] top-0 flex h-[32px] w-[19px] flex-col border-x border-[#cddedb] bg-[#65a99a]"><span class="flex h-[13px] items-center justify-center bg-[#edf2f1] text-[10px] text-[#333]">40</span></div></div></div>
              </div>
            </div>
            <!-- batches -->
            <div class="flex h-[343px] bg-[#f3f4f5]">
              <div class="flex h-[32px] w-[74px] shrink-0 items-center pl-[5px] text-[#333]"><svg class="h-[11px] w-[11px] shrink-0"><use href="#chev"/></svg><span class="ml-[7px] whitespace-nowrap text-[12.500px] tracking-[.2px] text-[#555]">Batches</span></div>
              <div class="flex w-[731px] flex-col text-[12px] text-[#555]">
                <div class="flex h-[72.500px] pt-[5px]"><span class="w-[55px] pl-[4px] pt-[4px] tracking-[.2px]">Device</span><div class="relative h-[63px] w-[676px] shrink-0 font-['DejaVu_Sans_Mono'] text-[8px] leading-[10px] text-[#444]"><svg id="cDev" class="absolute inset-0 h-[63px] w-[676px]"></svg><span class="absolute left-0 top-[23px]">20 GB</span><span class="absolute left-0 top-[52px]">0 B</span></div></div>
                <div class="flex h-[95.500px] bg-[#dcddde]"><span class="flex w-[55px] flex-col pl-[4px] pt-[18px] font-['DejaVu_Sans_Mono'] text-[11px] tracking-[2px]"><span>H⬆D</span><span class="mt-[29px]">D⬇H</span></span><div class="relative h-[95.500px] w-[676px] shrink-0 font-['DejaVu_Sans_Mono'] text-[8px] leading-[10px] text-[#444]"><svg id="cHD" class="absolute inset-0 h-[96px] w-[676px]"></svg><span class="absolute left-0 top-[5px]">10 GB/s</span><span class="absolute left-0 top-[37px]">0 B/s</span><span class="absolute left-0 top-[68px]">10 GB/s</span></div></div>
                <div class="mt-[6px] flex h-[65px] bg-[#dcddde]"><span class="w-[55px] bg-[#e0e1e2] pl-[4px] pt-[4px] tracking-[.2px]">Host</span><div class="relative h-[65px] w-[676px] shrink-0 font-['DejaVu_Sans_Mono'] text-[8px] leading-[10px] text-[#444]"><svg id="cHost" class="absolute inset-0 h-[65px] w-[676px]"></svg><span class="absolute left-0 top-[22px]">10 GB</span><span class="absolute left-0 top-[53px]">0 B</span></div></div>
                <div class="flex h-[104px]"><span class="flex w-[55px] flex-col pl-[4px] pt-[16px] text-[12px] leading-[16px] tracking-[.2px]"><span>Network<br>RX</span><span class="mt-[12px]">Network<br>TX</span></span><div class="relative h-[104px] w-[676px] shrink-0 font-['DejaVu_Sans_Mono'] text-[8px] leading-[10px] text-[#444]"><svg id="cNet" class="absolute inset-0 h-[104px] w-[676px]"></svg><span class="absolute left-0 top-[24px]">10 GB/s</span><span class="absolute left-0 top-[46px]">0 B/s</span><span class="absolute left-0 top-[67px]">10 GB/s</span><span class="absolute left-0 top-[89px]">20 GB/s</span></div></div>
              </div>
            </div>
          </div>
        </div>
        <!-- next worker -->
        <div class="flex h-[40px]">
          <div class="w-[136px] shrink-0 bg-[#f4f6f8]"><div class="flex pl-[5px] pt-[5px] text-[#333]"><svg class="mt-[1px] h-[11px] w-[11px]"><use href="#chevr"/></svg><span class="ml-[8px] text-[12.500px] leading-[16px] tracking-[.3px] text-[#555]">gohan-<br>compute-09-1</span></div></div>
          <div class="flex h-[30px] w-[129px] shrink-0 items-center bg-[#f4f6f8] pl-[5px] text-[#333]"><svg class="h-[11px] w-[11px] shrink-0"><use href="#chev"/></svg><span class="ml-[7px] whitespace-nowrap text-[12.500px] tracking-[.2px] text-[#555]">Task Activity</span></div>
          <svg id="cTask2" class="mt-[4px] h-[36px] w-[676px] shrink-0"></svg>
        </div>

        <!-- time grid over the charts -->
        <svg class="absolute left-[265px] top-0 h-[862px] w-[677px]" fill="none" stroke="#222" stroke-dasharray="4 3"><path d="M.5 0V862M168.500 0V862M337.500 0V862M507.500 0V862M675.500 0V862"/><path d="M635.500 0V862" stroke-dasharray="none" stroke="#111"/></svg>
        <div class="absolute right-[2px] top-[20px] h-[349px] w-[6px] rounded-[3px] bg-[#b5b7b7]"></div>
      </div>
    </main>

    <!-- right: selection panel -->
    <aside class="relative ml-[6px] h-[1014px] w-[411px] shrink-0 overflow-hidden bg-white text-[#666]">
      <div class="w-[399px]">
        <div class="flex h-[36px] items-center bg-[#a9c6c6] pl-[4px]">
          <span class="flex h-[27px] w-[30px] items-center justify-center rounded-[6px] bg-[#e2e7e7] text-[#444]"><svg class="h-[10px] w-[10px]"><use href="#chev"/></svg></span>
          <span class="ml-[8px] w-[33px] text-[14.200px] font-medium text-[#355252]">47 :</span>
          <span class="w-[212px] whitespace-nowrap text-[14.200px] font-medium text-[#2d4a4a]">File Input Split Column Scan</span>
          <span class="mt-[2px] flex h-[18px] w-[68px] items-center justify-center rounded-[4px] bg-[#dbe8e8] text-[12.500px] font-medium text-[#111]">Relation</span>
          <span class="ml-[8px] flex h-[27px] w-[32px] items-center justify-center rounded-[6px] bg-[#e2e7e7] text-[#333]"><svg class="h-[14px] w-[14px]" viewBox="0 0 14 14"><path d="M1 1 13 13M13 1 1 13" stroke="currentColor" stroke-width="1.300"/></svg></span>
        </div>
        <div class="px-[5px] pt-[3px]">
          <!-- Planner -->
          <div class="h-[265px] rounded-[4px] border border-[#eceeee] bg-[#fbfcfc]">
            <div class="flex h-[21px] items-center rounded-t-[4px] bg-[#e4e5e5]"><span class="flex h-full w-[20px] items-center justify-center bg-[#f5f6f6] text-[#333]"><svg class="h-[11px] w-[11px]"><use href="#chev"/></svg></span><span class="ml-[4px] text-[12px] font-semibold text-[#3a4242]">Planner</span></div>
            <div class="mt-[1px] flex flex-wrap gap-x-[4px] gap-y-[2px] pl-[2px]">
              <span class="inline-flex h-[19px] items-center rounded-[5px] border border-[#c3c8c8] px-[3px] text-[11px] text-[#949b9b]">Relation Type:<span class="ml-[4px] font-['DejaVu_Sans_Mono'] text-[11px] text-[#333]">THESEUS_FILE_INPUT_SPLIT_COLUMN_SCAN</span></span>
              <span class="inline-flex h-[18px] items-center rounded-[5px] border border-[#c3c8c8] px-[3px] text-[11px] text-[#949b9b]">SQL Type:<span class="ml-[4px] font-['DejaVu_Sans_Mono'] text-[11px] text-[#333]">ROW</span></span>
            </div>
            <div class="mx-[5px] mt-[3px] h-[71px] rounded-[4px] border border-[#eceeee]">
              <div class="flex h-[21px] items-center bg-[#e4e5e5]"><span class="flex h-full w-[20px] items-center justify-center bg-[#f5f6f6] text-[#333]"><svg class="h-[11px] w-[11px]"><use href="#chev"/></svg></span><span class="ml-[4px] text-[12px] font-semibold text-[#3a4242]">Relation-specific fields</span></div>
              <div class="mt-[1px] flex flex-wrap gap-x-[4px] gap-y-[2px] pl-[2px]">
                <span class="inline-flex h-[19px] items-center rounded-[5px] border border-[#c3c8c8] px-[3px] text-[11px] text-[#949b9b]">File Format:<span class="ml-[4px] font-['DejaVu_Sans_Mono'] text-[11px] text-[#333]">PARQUET</span></span>
                <span class="inline-flex h-[19px] items-center rounded-[5px] border border-[#c3c8c8] px-[3px] text-[11px] text-[#949b9b]">Table Names:<span class="ml-[4px] font-['DejaVu_Sans_Mono'] text-[11px] text-[#333]">theseus, engine, part</span></span>
                <span class="inline-flex h-[24px] items-center rounded-[5px] border border-[#c3c8c8] px-[3px] text-[11px] text-[#949b9b]">Table Scan Projects:<span class="ml-[5px] inline-flex h-[18px] items-center rounded-[5px] border border-[#c3c8c8] px-[2px] font-['DejaVu_Sans_Mono'] text-[11px] text-[#333]">0, 1</span></span>
              </div>
            </div>
            <div class="mx-[5px] mt-[3px] h-[97px] rounded-[4px] border border-[#eceeee]">
              <div class="flex h-[21px] items-center bg-[#e4e5e5]"><span class="flex h-full w-[20px] items-center justify-center bg-[#f5f6f6] text-[#333]"><svg class="h-[11px] w-[11px]"><use href="#chev"/></svg></span><span class="ml-[4px] text-[12px] font-semibold text-[#3a4242]">Predictions</span></div>
              <div class="grid h-[24px] grid-cols-[79px_48px_49px_48px_108px_50px] items-center overflow-hidden border-b border-[#e4e7e7] pl-[7px] text-[11.500px] text-[#9aa0a0]"><span>Row Count</span><span>(Min)</span><span>(Max)</span><span>Cost</span><span>Cost (GPU Mem)</span><span class="whitespace-nowrap">Row S</span></div>
              <div class="grid h-[40px] grid-cols-[79px_48px_49px_48px_108px_50px] items-center pl-[7px] text-[11.500px] leading-[14px] text-[#6c7272]"><span>2 GRow</span><span>2<br>GRow</span><span>2<br>GRow</span><span>2<br>GRow</span><span>48 GB</span><span>24 B</span></div>
              <div class="ml-[3px] h-[6px] w-[307px] rounded-[3px] bg-[#b3b6b6]"></div>
            </div>
            <div class="mx-[5px] mt-[4px] flex h-[22px] items-center rounded-[4px] border border-[#eceeee] text-[12px] text-[#6c7272]"><span class="flex w-[20px] justify-center text-[#333]"><svg class="h-[11px] w-[11px]"><use href="#chevr"/></svg></span><span class="ml-[4px]">Details</span></div>
          </div>

          <!-- Operators -->
          <div class="mt-[6px] h-[483px] rounded-[4px] border border-[#eceeee] bg-[#fbfcfc]">
            <div class="flex h-[21px] items-center rounded-t-[4px] bg-[#e4e5e5]"><span class="flex h-full w-[20px] items-center justify-center bg-[#8a1f52] text-[#f7dbe6]"><svg class="h-[11px] w-[11px]"><use href="#chev"/></svg></span><span class="ml-[4px] text-[12px] font-semibold text-[#3a4242]">Operators</span></div>
            <div class="mt-[1px] flex gap-x-[4px] pl-[2px]">
              <span class="inline-flex h-[19px] items-center rounded-[5px] border border-[#c3c8c8] px-[2px] font-['DejaVu_Sans_Mono'] text-[11px] text-[#8a1f52]">IO</span>
              <span class="inline-flex h-[19px] items-center rounded-[5px] border border-[#c3c8c8] px-[3px] text-[11px] text-[#949b9b]">Pipeline Head:<span class="ml-[4px] font-['DejaVu_Sans_Mono'] text-[11px] text-[#333]">true</span></span>
            </div>
            <div class="mx-[5px] mt-[3px] h-[149px] rounded-[4px] border border-[#eceeee]">
              <div class="flex h-[21px] items-center bg-[#e4e5e5]"><span class="flex h-full w-[20px] items-center justify-center bg-[#f5f6f6] text-[#333]"><svg class="h-[11px] w-[11px]"><use href="#chev"/></svg></span><span class="ml-[4px] text-[12px] font-semibold text-[#3a4242]">Counters</span></div>
              <div class="mx-[1px] w-[363px] overflow-hidden">
                <div class="grid h-[16px] grid-cols-[71px_71px_50px_47px_64px_70px] items-center whitespace-nowrap border-b border-[#6fb5aa] pl-[7px] text-[11.500px] text-[#9aa0a0]"><span>Side</span><span>Port</span><span>Bytes</span><span>Rows</span><span>Batches</span><span>Empty Bat</span></div>
                <div class="grid h-[38px] grid-cols-[71px_71px_50px_47px_64px_70px] items-center border-b border-[#6fb5aa] pl-[7px] text-[11.500px] leading-[14px] text-[#6c7272]"><span class="text-[12px]">Inputs</span><span class="text-[10.500px]">unary_port</span><span>450 k</span><span>2.26<br>k</span><span>96</span><span>0</span></div>
                <div class="grid h-[38px] grid-cols-[71px_71px_50px_47px_64px_70px] items-center border-b border-[#6fb5aa] pl-[7px] text-[11.500px] leading-[14px] text-[#6c7272]"><span class="text-[12px]">Outputs</span><span class="text-[10.500px]">unary_port</span><span>89.5<br>G</span><span>2 G</span><span>96</span><span>0</span></div>
                <div class="flex h-[23px] items-center gap-[5px] border-b border-[#6fb5aa] pl-[7px] text-[11.500px] text-[#6c7272]"><span class="w-[64px] text-[12px]">Tasks</span>
                  <span class="inline-flex h-[18px] items-center rounded-[5px] border border-[#c3c8c8] px-[3px] text-[11px] text-[#949b9b]">Success:<span class="ml-[4px] font-['DejaVu_Sans_Mono'] text-[11px] text-[#333]">96</span></span>
                  <span class="inline-flex h-[18px] items-center rounded-[5px] border border-[#c3c8c8] px-[3px] text-[11px] text-[#949b9b]">Retry:<span class="ml-[4px] font-['DejaVu_Sans_Mono'] text-[11px] text-[#333]">0</span></span>
                  <span class="inline-flex h-[18px] items-center rounded-[5px] border border-[#c3c8c8] px-[3px] text-[11px] text-[#949b9b]">Fail:<span class="ml-[4px] font-['DejaVu_Sans_Mono'] text-[11px] text-[#333]">0</span></span>
                </div>
              </div>
              <div class="ml-[3px] mt-[2px] h-[6px] w-[317px] rounded-[3px] bg-[#b3b6b6]"></div>
            </div>
            <div class="mx-[5px] mt-[4px] flex h-[22px] items-center rounded-[4px] border border-[#eceeee] text-[12px] text-[#6c7272]"><span class="flex w-[20px] justify-center text-[#333]"><svg class="h-[11px] w-[11px]"><use href="#chevr"/></svg></span><span class="ml-[4px]">Details</span></div>
            <div class="mx-[5px] mt-[4px] h-[259px] rounded-[4px] border border-[#eceeee]">
              <div class="flex h-[21px] items-center bg-[#e4e5e5]"><span class="flex h-full w-[20px] items-center justify-center bg-[#f5f6f6] text-[#333]"><svg class="h-[11px] w-[11px]"><use href="#chev"/></svg></span><span class="ml-[4px] text-[12px] font-semibold text-[#3a4242]">Task Metrics (Summed)</span></div>
              <div class="mx-[5px] mt-[2px] h-[64px] rounded-[4px] border border-[#eceeee]">
                <div class="flex h-[21px] items-center bg-[#e4e5e5]"><span class="flex h-full w-[20px] items-center justify-center bg-[#f5f6f6] text-[#333]"><svg class="h-[11px] w-[11px]"><use href="#chev"/></svg></span><span class="ml-[4px] text-[12px] font-semibold text-[#3a4242]">Initial Stages</span></div>
                <div class="mt-[1px] flex flex-wrap gap-x-[4px] gap-y-[2px] pl-[2px]">
                  <span class="inline-flex h-[18px] items-center rounded-[5px] border border-[#c3c8c8] px-[2px] font-['DejaVu_Sans_Mono'] text-[11px] text-[#333]">96 Task</span>
                  <span class="inline-flex h-[18px] items-center rounded-[5px] border border-[#c3c8c8] px-[3px] text-[11px] text-[#949b9b]">Reserving Memory Duration:<span class="ml-[4px] font-['DejaVu_Sans_Mono'] text-[11px] text-[#333]">2.2 ms</span></span>
                  <span class="inline-flex h-[18px] items-center rounded-[5px] border border-[#c3c8c8] px-[3px] text-[11px] text-[#949b9b]">Fetching Duration:<span class="ml-[4px] font-['DejaVu_Sans_Mono'] text-[11px] text-[#333]">955 μs</span></span>
                </div>
              </div>
              <div class="mx-[5px] mt-[3px] h-[84px] rounded-[4px] border border-[#eceeee]">
                <div class="flex h-[21px] items-center bg-[#e4e5e5]"><span class="flex h-full w-[20px] items-center justify-center bg-[#f5f6f6] text-[#333]"><svg class="h-[11px] w-[11px]"><use href="#chev"/></svg></span><span class="ml-[4px] text-[12px] font-semibold text-[#3a4242]">Operator Stages</span></div>
                <div class="flex flex-wrap gap-x-[4px] gap-y-[2px] pl-[2px]">
                  <span class="inline-flex h-[19px] items-center rounded-[5px] border border-[#c3c8c8] px-[3px] text-[11px] text-[#949b9b]">Memory Reserved Bytes:<span class="ml-[4px] font-['DejaVu_Sans_Mono'] text-[11px] text-[#333]">302 GB</span></span>
                  <span class="w-[200px]"></span>
                  <span class="inline-flex h-[19px] items-center rounded-[5px] border border-[#c3c8c8] px-[3px] text-[11px] text-[#949b9b]">Peak Consumption Bytes:<span class="ml-[4px] font-['DejaVu_Sans_Mono'] text-[11px] text-[#333]">376 GB</span></span>
                  <span class="inline-flex h-[19px] items-center rounded-[5px] border border-[#c3c8c8] px-[3px] text-[11px] text-[#949b9b]">Queueing Duration:<span class="ml-[4px] font-['DejaVu_Sans_Mono'] text-[11px] text-[#333]">13.3 s</span></span>
                  <span class="inline-flex h-[19px] items-center rounded-[5px] border border-[#c3c8c8] px-[3px] text-[11px] text-[#949b9b]">Processing Duration:<span class="ml-[4px] font-['DejaVu_Sans_Mono'] text-[11px] text-[#333]">39 s</span></span>
                </div>
              </div>
              <div class="mx-[5px] mt-[4px] h-[77px] rounded-[4px] border border-[#eceeee]">
                <div class="flex h-[21px] items-center bg-[#e4e5e5]"><span class="flex h-full w-[20px] items-center justify-center bg-[#f5f6f6] text-[#333]"><svg class="h-[11px] w-[11px]"><use href="#chev"/></svg></span><span class="ml-[4px] text-[12px] font-semibold text-[#3a4242]">Inputs/Outputs</span></div>
                <div class="mt-[1px] flex flex-wrap gap-x-[4px] gap-y-[3px] pl-[2px]">
                  <span class="inline-flex h-[24px] items-center rounded-[5px] border border-[#c3c8c8] px-[3px] text-[11px] text-[#949b9b]">Input Bytes:<span class="ml-[5px] inline-flex h-[18px] items-center rounded-[5px] border border-[#c3c8c8] px-[2px] font-['DejaVu_Sans_Mono'] text-[11px] text-[#333]">450 kB</span></span>
                  <span class="inline-flex h-[24px] items-center rounded-[5px] border border-[#c3c8c8] px-[3px] text-[11px] text-[#949b9b]">Input Rows:<span class="ml-[5px] inline-flex h-[18px] items-center rounded-[5px] border border-[#c3c8c8] px-[2px] font-['DejaVu_Sans_Mono'] text-[11px] text-[#333]">2.26 kRow</span></span>
                  <span class="w-[80px]"></span>
                  <span class="inline-flex h-[24px] items-center rounded-[5px] border border-[#c3c8c8] px-[3px] text-[11px] text-[#949b9b]">Output Bytes:<span class="ml-[5px] inline-flex h-[18px] items-center rounded-[5px] border border-[#c3c8c8] px-[2px] font-['DejaVu_Sans_Mono'] text-[11px] text-[#333]">89.5 GB</span></span>
                  <span class="inline-flex h-[24px] items-center rounded-[5px] border border-[#c3c8c8] px-[3px] text-[11px] text-[#949b9b]">Output Rows:<span class="ml-[5px] inline-flex h-[18px] items-center rounded-[5px] border border-[#c3c8c8] px-[2px] font-['DejaVu_Sans_Mono'] text-[11px] text-[#333]">2 GRow</span></span>
                </div>
              </div>
            </div>
          </div>
        </div>

        <div class="mt-[7px] flex h-[36px] items-center bg-[#a9c6c6] pl-[4px]">
          <span class="flex h-[27px] w-[30px] items-center justify-center rounded-[6px] bg-[#e2e7e7] text-[#444]"><svg class="h-[10px] w-[10px]"><use href="#chev"/></svg></span>
          <span class="ml-[8px] w-[33px] text-[14.200px] font-medium text-[#355252]">27 :</span>
          <span class="w-[212px] whitespace-nowrap text-[14.200px] font-medium text-[#2d4a4a]">Adaptive Exchange</span>
          <span class="mt-[2px] flex h-[18px] w-[68px] items-center justify-center rounded-[4px] bg-[#dbe8e8] text-[12.500px] font-medium text-[#111]">Relation</span>
          <span class="ml-[8px] flex h-[27px] w-[32px] items-center justify-center rounded-[6px] bg-[#e2e7e7] text-[#333]"><svg class="h-[14px] w-[14px]" viewBox="0 0 14 14"><path d="M1 1 13 13M13 1 1 13" stroke="currentColor" stroke-width="1.300"/></svg></span>
        </div>
        <div class="px-[5px] pt-[3px]">
          <div class="h-[170px] rounded-[4px] border border-[#eceeee] bg-[#fbfcfc]">
            <div class="flex h-[21px] items-center rounded-t-[4px] bg-[#e4e5e5]"><span class="flex h-full w-[20px] items-center justify-center bg-[#f5f6f6] text-[#333]"><svg class="h-[11px] w-[11px]"><use href="#chev"/></svg></span><span class="ml-[4px] text-[12px] font-semibold text-[#3a4242]">Planner</span></div>
            <div class="mt-[1px] flex gap-x-[4px] pl-[2px]">
              <span class="inline-flex h-[18px] items-center rounded-[5px] border border-[#c3c8c8] px-[3px] text-[11px] text-[#949b9b]">Relation Type:<span class="ml-[4px] font-['DejaVu_Sans_Mono'] text-[11px] text-[#333]">THESEUS_ADAPTIVE_EXCHANGE</span></span>
              <span class="inline-flex h-[18px] items-center rounded-[5px] border border-[#c3c8c8] px-[3px] text-[11px] text-[#949b9b]">SQL Type:<span class="ml-[4px] font-['DejaVu_Sans_Mono'] text-[11px] text-[#333]">ROW</span></span>
            </div>
            <div class="mx-[5px] mt-[3px] h-[50px] rounded-[4px] border border-[#eceeee]">
              <div class="flex h-[21px] items-center bg-[#e4e5e5]"><span class="flex h-full w-[20px] items-center justify-center bg-[#f5f6f6] text-[#333]"><svg class="h-[11px] w-[11px]"><use href="#chev"/></svg></span><span class="ml-[4px] text-[12px] font-semibold text-[#3a4242]">Relation-specific fields</span></div>
              <div class="mt-[1px] flex gap-x-[4px] pl-[2px]">
                <span class="inline-flex h-[24px] items-center rounded-[5px] border border-[#c3c8c8] px-[3px] text-[11px] text-[#949b9b]">Adaptive Exchange Is Left:<span class="ml-[4px] font-['DejaVu_Sans_Mono'] text-[11px] text-[#333]">true</span></span>
                <span class="inline-flex h-[24px] items-center rounded-[5px] border border-[#c3c8c8] px-[3px] text-[11px] text-[#949b9b]">Join Keys:<span class="ml-[5px] inline-flex h-[18px] items-center rounded-[5px] border border-[#c3c8c8] px-[2px] font-['DejaVu_Sans_Mono'] text-[11px] text-[#333]">0, 0</span></span>
              </div>
            </div>
            <div class="mx-[5px] mt-[3px] h-[80px] rounded-[4px] border border-[#eceeee]">
              <div class="flex h-[21px] items-center bg-[#e4e5e5]"><span class="flex h-full w-[20px] items-center justify-center bg-[#f5f6f6] text-[#333]"><svg class="h-[11px] w-[11px]"><use href="#chev"/></svg></span><span class="ml-[4px] text-[12px] font-semibold text-[#3a4242]">Predictions</span></div>
              <div class="grid h-[24px] grid-cols-[79px_46px_75px_48px_108px_20px] items-center overflow-hidden border-b border-[#e4e7e7] pl-[7px] text-[11.500px] text-[#9aa0a0]"><span>Row Count</span><span>(Min)</span><span>(Max)</span><span>Cost</span><span class="whitespace-nowrap">Cost (GPU Mem)</span><span class="whitespace-nowrap">Ro</span></div>
            </div>
          </div>
        </div>
      </div>
      <div class="absolute right-[3px] top-[2px] h-[606px] w-[6px] rounded-[3px] bg-[#b5b7b7]"></div>
      <div class="absolute bottom-0 left-0 flex h-[21px] w-[410px] items-center justify-center rounded-[6px] bg-[#e3e5e5] pl-[10px] text-[11.500px] font-medium text-[#333]">
        <svg class="h-[18px] w-[18px]" viewBox="0 0 18 18"><circle cx="9" cy="9" r="9" fill="#222"/><path d="M5.500 5.500 12.500 12.500M12.500 5.500 5.500 12.500" stroke="#fff" stroke-width="1.800"/></svg>
        <span class="ml-[8px]">Clear Selected (2)</span>
      </div>
    </aside>
  </div>

  <footer class="flex h-[30px] shrink-0 items-center text-[12.500px] text-[#4ba89b]">
    <span class="ml-[5px] w-[58px] whitespace-nowrap">Plan Panel</span>
    <svg class="ml-[6px] h-[20px] w-[20px]"><use href="#eye"/></svg>
    <span class="ml-[714px] w-[74px] whitespace-nowrap">Reset Panels</span>
    <svg class="ml-[5px] h-[18px] w-[18px]"><use href="#reload"/></svg>
    <span class="ml-[11px] w-[60px] whitespace-nowrap tracking-[-.4px]">Main Panel</span>
    <svg class="ml-[6px] h-[20px] w-[20px]"><use href="#eye"/></svg>
    <span class="ml-[715px] w-[90px] whitespace-nowrap">Selection Panel</span>
    <svg class="ml-[5px] h-[20px] w-[20px]"><use href="#eye"/></svg>
    <span class="ml-[10px] w-[56px] whitespace-nowrap">Fix tooltip</span>
    <span class="ml-[7px] h-[17px] w-[17px] rounded-[4px] border border-[#4ba89b]"></span>
  </footer>
</div>

<script>
const T='#45a896',Y='#e0c766',P='#a63f7d',W=8.45;
const $=id=>document.getElementById(id);
const rep=(v,n)=>Array(n).fill(v);
function pth(a,x0,b,s){let d='M'+x0+' '+b;a.forEach((v,i)=>{d+='V'+(b-s*v)+'H'+(x0+(i+1)*W)});return d+'V'+b+'Z'}
function area(id,a,x0,b,s,c){$(id).insertAdjacentHTML('beforeend','<path d="'+pth(a,x0,b,s)+'" fill="'+c+'"/>')}
function rect(id,x,y,w,h,c,st){$(id).insertAdjacentHTML('beforeend','<rect x="'+x+'" y="'+y+'" width="'+w+'" height="'+h+'" fill="'+c+'"'+(st?' stroke="'+st+'"':'')+'/>')}
function hline(id,y,c,dash){$(id).insertAdjacentHTML('beforeend','<path d="M0 '+y+'H676" stroke="'+c+'" stroke-width="1"'+(dash?' stroke-dasharray="4 3"':'')+'/>')}

const teal=[.73,...rep(1,56),.69,.69,0,.55,...rep(1,7),0,.75,...rep(1,6),.85,1,1,.75];
const yel=[0,0,0,0,0,0,0,.04,.72,.87,.85,.75,.62,.22,.33,.25,.25,.2,.8,.8,.28,.22,.5,.22,.22,.74,.74,.25,.14,.8,.45,.14,.7,.7,.4,.45,.45,.27,.22,.8,.17,.45,.45,.35,.2,.25,.25,.26,.17,.6,.2,.19,.19,.14,.14,.14,0,.33,.33,0,.35,.87,.85,.8,.45,.45,.45,.9,0,.65,.55,.55,.45,.45,.58,.3,.1,.65,.08,.05];

/* all workers */
area('cAll',teal.map((v,i)=>i<57?1:(i==57||i==58?.55:v)),0,44,33,T);
const yA=[0,0,0,0,0,0,0,.08,.5,.75,.8,.75,.5,.3,.3,.32,.3,.35,.38,.35,.3,.3,.35,.3,.3,.3,.32,.3,.3,.3,.32,.3,.35,.3,.3,.35,.3,.3,.3,.4,.3,.35,.3,.3,.3,.3,.3,.35,.3,.32,.35,.3,.32,.3,.2,.15,.1,.25,.1,0,.4,.85,.7,.65,.45,.75,.35,.4,0,.75,.65,.5,.5,.4,.55,.3,.15,.6,.1,.1];
area('cAll',yA,0,44,33,Y);
$('cAll').insertAdjacentHTML('beforeend','<rect x="480" y="42" width="16" height="2" fill="'+P+'"/><path d="M.5 0V44M168.500 0V44M337.500 0V44M507.500 0V44" stroke="#222"/><path d="M675.500 0V44M635.500 0V44" stroke="#222" stroke-dasharray="4 3"/><path d="M632 9h7l-3.500 5z" fill="#111"/>');

/* task activity */
area('cTask',teal,0,70,70,T);area('cTask',yel,0,70,70,Y);rect('cTask',480,60,9,10,P);

/* operators */
rect('cOps',25,14,435,18.500,'#e9ebeb','#d4d8d8');rect('cOps',32,46,432,18.500,'#e9ebeb','#d4d8d8');rect('cOps',63,78,433,18.500,'#e9ebeb','#d4d8d8');
rect('cOps',512,14,65,18.500,'#e9ebeb','#d4d8d8');rect('cOps',591,14,85,18.500,'#e9ebeb','#d4d8d8');rect('cOps',543,46,34,18.500,'#e9ebeb','#d4d8d8');rect('cOps',556,78,97,18.500,'#e9ebeb','#d4d8d8');rect('cOps',567,110,109,18.500,'#e9ebeb','#d4d8d8');rect('cOps',79,110,13,18.500,'#e9ebeb','#d4d8d8');rect('cOps',455,110,23,18.500,'#e9ebeb','#d4d8d8');rect('cOps',568,174,87,18,'#e9ebeb','#d4d8d8');
const S=18;
area('cOps',[1,1,1],0,32,S,T);
area('cOps',[.3,.6,.9,.9,.9,.5,0,.2,.3,.4,.3,.6,.6,.7,.8,.2,0,.8,.3,.6,.5,.2,.7,.3,.3,.7,.2,.5,.7,.8,.3,.4,.3,.45,.5,.6,.1,.7,.7,.6,.55,.6,.6,.45,.4,.6,.5,.55,.6,.4,.3],25,32,S,T);
area('cOps',[.95],479,32,S,T);rect('cOps',479,29,8,3,P);
area('cOps',[.5],504,32,S,Y);
area('cOps',[1,1,.95,.7,.6,.3,.1,.05],512,32,S,T);area('cOps',[.9,.9,.6,.5,.5,.2,.05,.03],512,32,S,Y);
area('cOps',[.6,.8,.9,.8,.8,.9,.9,.8,.9,.8],591,32,S,T);area('cOps',[.4,.3,.5,.4,.35,.3,.2,.1,.2,.1],591,32,S,Y);rect('cOps',665,29,9,3,P);
area('cOps',[1,1,1],0,64,S,T);
area('cOps',[.7,.1,.3,.1,.4,.3,.1,.9,.1,.1,.5,.1,.4,.3,0,.1,.8,.3,.2,.4,.4,.4,.4,.5,.6,.2,.4,.1,.5,.6,.3,.5,.2,.2,.6,.2,.4,.5,.6,.6,.7,.2,.1,.4,.4,.5,.5,.6,.1,.1,.1],32,64,S,T);
area('cOps',[.95],488,64,S,T);area('cOps',[.5,.9,.1,.1,.2,.3],534,64,S,T);
area('cOps',[.9,.3,.9,.3,.9],0,96,S,T);
area('cOps',[.9,.95,.85,.7,.4,.3,.2,.15,.5,.2,.9,.9,.2,.5,.1,.6,.6,.1,.3,.8,.1,.2,.4,.3,.2,.8,.4,.3,.3,.3,.2,.4,.3,.6,.2,.9,.2,.3,.2,.15,.2,.1,.15,.1,.2,.3,.7,.1,.05,.05,.03,.4],63,96,S,Y);
area('cOps',[.9],535,96,S,T);area('cOps',[.9,.5,.3],552,96,S,Y);
rect('cOps',0,110,4,18,T);area('cOps',[.25],71,128,S,T);area('cOps',[.9],84,128,S,Y);area('cOps',[.3,.95,.95,.5],446,128,S,T);area('cOps',[.8],558,128,S,Y);
rect('cOps',0,142,4,18,T);area('cOps',[.75],558,160,S,Y);area('cOps',[.6],567,160,S,T);
area('cOps',[.75],558,192,S,T);area('cOps',[.1,.15,.3,.7,.9],590,192,S,T);area('cOps',[.9,.9],632,192,S,T);

/* threads S row */
[35,40,53,84,121,165,199,220,280,304,389].forEach(x=>rect('cS',x+.5,.5,2,31,'#e8eaea','#a6c9c3'));
rect('cS',40,20,4,12,'#c8cbcb');rect('cS',480,0,8,32,'#a8558f');

/* thread rows */
const tT='#65a99a',tY='#e1cf90';
[0,1,2,3,4].forEach(r=>{
  const t=teal.map((v,i)=>{if(i>=56&&i<=59)return [.5,.3,.45,0][i-56]*(r==3?.6:1);if(i==60)return .45;if(i==68)return 0;if(i==0)return .85;return 1});
  const y=yel.map((v,i)=>{
    if(i<7||i>=56&&i<60||i==68)return 0;
    const k=(i*37+r*53+r*i*11)%23/23;
    if(i<60&&k<.22)return 0;
    const s=yel[Math.min(79,Math.max(0,i+(r%3)-1))];
    return Math.min(.98,Math.max(.12,s*.6+k*.45));
  });
  area('cT'+r,t,0,32,32,tT);area('cT'+r,y,0,32,32,tY);
});

/* device */
hline('cDev',2,'#222',1);hline('cDev',32,'#222',1);
const dev=[2,12,24,34,34,33,33,34,38,42,34,28,26,30,34,34,35,36,36,45,36,36,40,42,40,39,42,40,42,44,42,44,43,40,40,50,42,50,40,42,42,44,42,40,42,50,44,42,42,48,44,44,46,48,50,55,62,62,50,44,38,36,36,38,40,36,38,42,38,22,20,18,20,22,24,30,30,28,27,26];
area('cDev',dev,0,62,1,'#78a830');hline('cDev',62,'#222');rect('cDev',0,60,16,2,'#555');

/* host to device */
hline('cHD',15,'#222',1);hline('cHD',78,'#222',1);
const hd=[...rep(0,7),4,26,37,35,32,32,28,30,24,15,20,33,33,9,33,30,14,24,28,43,9,33,12,30,18,20,32,24,29,26,24,26,30,22,26,22,26,32,15,26,22,27,25,16,26,19,18,32,17,18,18,0,17,0,20,28,27,26,24,27,32,47,12,0,22,24,24,28,26,33,18,12,16,1,1];
area('cHD',hd.slice(0,80),0,47,1,'#78a830');
const dh=rep(0,80);dh[57]=41;dh[58]=2;dh[64]=1.500;dh[67]=5;
area('cHD',dh,0,47,-1,'#3f5320');hline('cHD',47.500,'#222');

/* host */
hline('cHost',3,'#222',1);hline('cHost',32,'#222',1);
const host=[0,0,0,0,5,20,33,44,50,50,42,36,32,20,14,11,13,11,13,12,12,10,11,13,12,11,12,13,11,10,9,11,12,14,13,15,17,15,19,14,13,18,14,12,14,12,11,12,10,11,10,9,11,12,10,12,13,11,9,8,28,30,46,51,51,50,48,46,44,42,36,28,40,44,46,47,45,35,25,14];
area('cHost',host,0,64,1,'#42a8de');hline('cHost',64.500,'#222');rect('cHost',0,62,32,2,'#555');rect('cHost',657,62,16,2,'#555');

/* network */
hline('cNet',8,'#222',1);hline('cNet',30,'#222',1);hline('cNet',73,'#222',1);hline('cNet',95,'#222',1);
const rx=[0,0,0,0,14,22,20,20,20,22,14,13,15,17,16,12,8,14,16,16,16,17,15,15,17,17,16,21,15,18,18,15,15,17,20,17,16,17,16,17,17,17,14,15,20,16,16,15,16,15,13,15,15,18,14,14,21,13,10,9,4,2,0,12,17,22,20,16,10,8,19,8,16,18,18,15,6,7,6,1];
const tx=[0,0,0,0,31,20,20,16,0,30,12,0,0,11,25,13,22,5,26,26,5,1,27,25,14,14,21,5,28,17,17,33,13,26,21,21,13,33,17,9,9,0,25,19,19,19,15,15,25,21,25,25,33,13,23,17,13,5,0,10,13,26,23,23,22,0,13,18,13,10,19,25,21,21,5,5,5,5,5,0];
area('cNet',rx,0,52,1,'#82214f');area('cNet',tx,0,52,-1,'#4a1030');hline('cNet',52.500,'#222');

/* next worker */
const t2=[.55,...rep(1,54),.7,0,0,0,0,0,1,1,1,1,1,0,0,0,.5,...rep(1,8),.8,.6];
const y2=[...rep(0,9),.4,.85,.75,.55,0,0,0,0,0,.9,0,0,0,.75,0,0,0,0,.8,.6,.3,.2,0,.9,.9,.3,.7,0,0,.8,.8,.1,0,0,0,.6,0,0,0,0,0,0,.4,0,0,0,0,0,0,0,0,0,0,0,.8,.75,0,0,0,0,.9,0,0,0,0,0,0,.5,.8,.4,0,0,0,0,0];
area('cTask2',t2.map(v=>v),0,36,36,T);area('cTask2',y2,0,36,36,Y);
</script>
</body>
</html>
